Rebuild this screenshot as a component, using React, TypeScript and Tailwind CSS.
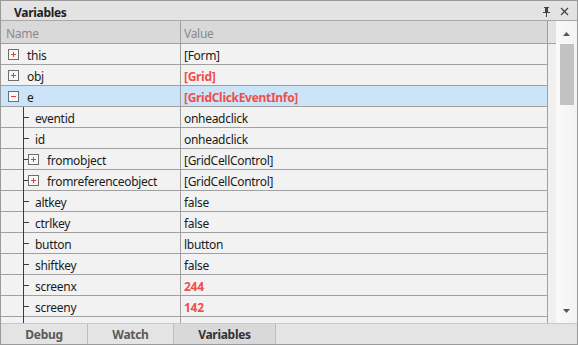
type Row = {
  name: string;
  value: string;
  level: 0 | 1;
  expander?: "plus" | "minus";
  red?: boolean;
  selected?: boolean;
};

const rows: Row[] = [
  { name: "this", value: "[Form]", level: 0, expander: "plus" },
  { name: "obj", value: "[Grid]", level: 0, expander: "plus", red: true },
  { name: "e", value: "[GridClickEventInfo]", level: 0, expander: "minus", red: true, selected: true },
  { name: "eventid", value: "onheadclick", level: 1 },
  { name: "id", value: "onheadclick", level: 1 },
  { name: "fromobject", value: "[GridCellControl]", level: 1, expander: "plus" },
  { name: "fromreferenceobject", value: "[GridCellControl]", level: 1, expander: "plus" },
  { name: "altkey", value: "false", level: 1 },
  { name: "ctrlkey", value: "false", level: 1 },
  { name: "button", value: "lbutton", level: 1 },
  { name: "shiftkey", value: "false", level: 1 },
  { name: "screenx", value: "244", level: 1, red: true },
  { name: "screeny", value: "142", level: 1, red: true },
];

function Expander({ kind }: { kind: "plus" | "minus" }) {
  return (
    <span className="relative flex h-[11px] w-[11px] shrink-0 items-center justify-center border border-[#6e6e6e] bg-[#f7f7f7]">
      <span className="absolute h-px w-[5px] bg-[#e0403a]" />
      {kind === "plus" && <span className="absolute h-[5px] w-px bg-[#e0403a]" />}
    </span>
  );
}

function NameCell({ row }: { row: Row }) {
  if (row.level === 0) {
    return (
      <div className="flex h-full items-center pl-[7px]">
        <Expander kind={row.expander ?? "plus"} />
        <span className="ml-[8px] pt-[4px]">{row.name}</span>
      </div>
    );
  }
  return (
    <div className="relative flex h-full items-center">
      {/* tree guide */}
      <span className="absolute left-[22px] top-0 h-[22px] w-px bg-[#3c3c3c]" />
      <span className="absolute left-[22px] top-1/2 h-px w-[6px] bg-[#3c3c3c]" />
      {row.expander ? (
        <div className="flex items-center pl-[27px]">
          <Expander kind={row.expander} />
          <span className="ml-[8px] pt-[4px]">{row.name}</span>
        </div>
      ) : (
        <span className="pl-[34px] pt-[4px]">{row.name}</span>
      )}
    </div>
  );
}

export default function App() {
  return (
    <div
      className="flex h-[345px] w-[578px] flex-col overflow-hidden border border-[#9a9a9a] bg-[#f0f0f0] text-[12px] tracking-[-0.3px] text-[#1b1b1b]"
      style={{ fontFamily: "'Noto Sans', 'Open Sans', sans-serif" }}
    >
      {/* Title bar */}
      <div className="flex h-[20px] shrink-0 items-center border-b border-[#a8a8a8] bg-[#e3e3e3] pl-[13px] pr-[8px]">
        <span className="pt-[4px] font-bold text-[#222]">Variables</span>
        <div className="ml-auto flex items-center gap-[9px] pt-[2px]">
          <svg width="9" height="10" viewBox="0 0 9 10" fill="#444">
            <rect x="2" y="0" width="5" height="1" />
            <rect x="3" y="1" width="3" height="4" />
            <rect x="1" y="5" width="7" height="1" />
            <rect x="4" y="6" width="1" height="4" />
          </svg>
          <svg width="9" height="9" viewBox="0 0 9 9" stroke="#444" strokeWidth="1.3">
            <path d="M1 1L8 8M8 1L1 8" />
          </svg>
        </div>
      </div>

      {/* Grid area */}
      <div className="flex min-h-0 flex-1">
        <div className="relative flex min-w-0 flex-1 flex-col overflow-hidden">
          {/* Header */}
          <div className="flex h-[23px] shrink-0 border-b border-[#a0a0a0]">
            <div className="flex w-[180px] items-center border-r border-[#a0a0a0] bg-[#d9d9d9] pl-[5px] pt-[4px] text-[#8a8a8a]">
              Name
            </div>
            <div className="flex w-[367px] items-center border-r border-[#a0a0a0] bg-[#d9d9d9] pl-[3px] pt-[4px] text-[#8a8a8a]">
              Value
            </div>
            <div className="flex-1 bg-[#e3e3e3]" />
          </div>

          {rows.map((row) => (
            <div key={row.name} className="flex h-[21px] shrink-0">
              <div
                className={`w-[180px] border-b border-r border-[#a0a0a0] ${
                  row.selected ? "bg-[#cce4f7]" : "bg-[#f2f2f2]"
                }`}
              >
                <NameCell row={row} />
              </div>
              <div
                className={`flex w-[367px] items-center border-b border-r border-[#a0a0a0] pl-[3px] pt-[4px] ${
                  row.selected ? "bg-[#cce4f7]" : "bg-[#f2f2f2]"
                } ${row.red ? "font-bold text-[#f04e4a]" : ""}`}
              >
                {row.value}
              </div>
              <div className="flex-1 bg-[#f0f0f0]" />
            </div>
          ))}

          {/* partial row */}
          <div className="flex flex-1">
            <div className="relative w-[180px] border-r border-[#a0a0a0] bg-[#f2f2f2]">
              <span className="absolute left-[22px] top-0 h-full w-px bg-[#3c3c3c]" />
            </div>
            <div className="w-[367px] border-r border-[#a0a0a0] bg-[#f2f2f2]" />
            <div className="flex-1 bg-[#f0f0f0]" />
          </div>
        </div>

        {/* Scrollbar */}
        <div className="flex w-[21px] shrink-0 flex-col items-center bg-gradient-to-r from-[#fafafa] to-[#f3f3f3]">
          <div className="flex h-[22px] w-full items-center justify-center pt-[4px]">
            <svg width="7" height="4" viewBox="0 0 7 4" fill="#555">
              <path d="M3.5 0L7 4H0Z" />
            </svg>
          </div>
          <div className="mt-[1px] h-[61px] w-[14px] bg-[#c2c2c2]" />
          <div className="flex-1" />
          <div className="flex h-[20px] w-full items-center justify-center pb-[4px]">
            <svg width="7" height="4" viewBox="0 0 7 4" fill="#555">
              <path d="M0 0H7L3.5 4Z" />
            </svg>
          </div>
        </div>
      </div>

      {/* Tabs */}
      <div className="flex h-[21px] shrink-0 border-t border-[#c8c8c8] bg-[#e4e4e4] font-bold">
        <div className="flex w-[87px] items-center justify-center border-r border-[#bdbdbd] pt-[2px] text-[#5a5a5a]">
          Debug
        </div>
        <div className="flex w-[86px] items-center justify-center border-r border-[#bdbdbd] pt-[2px] text-[#5a5a5a]">
          Watch
        </div>
        <div className="flex w-[102px] items-center justify-center border-r border-[#bdbdbd] bg-[#d9d9d9] pt-[2px] text-[#333]">
          Variables
        </div>
        <div className="flex-1" />
      </div>
    </div>
  );
}
